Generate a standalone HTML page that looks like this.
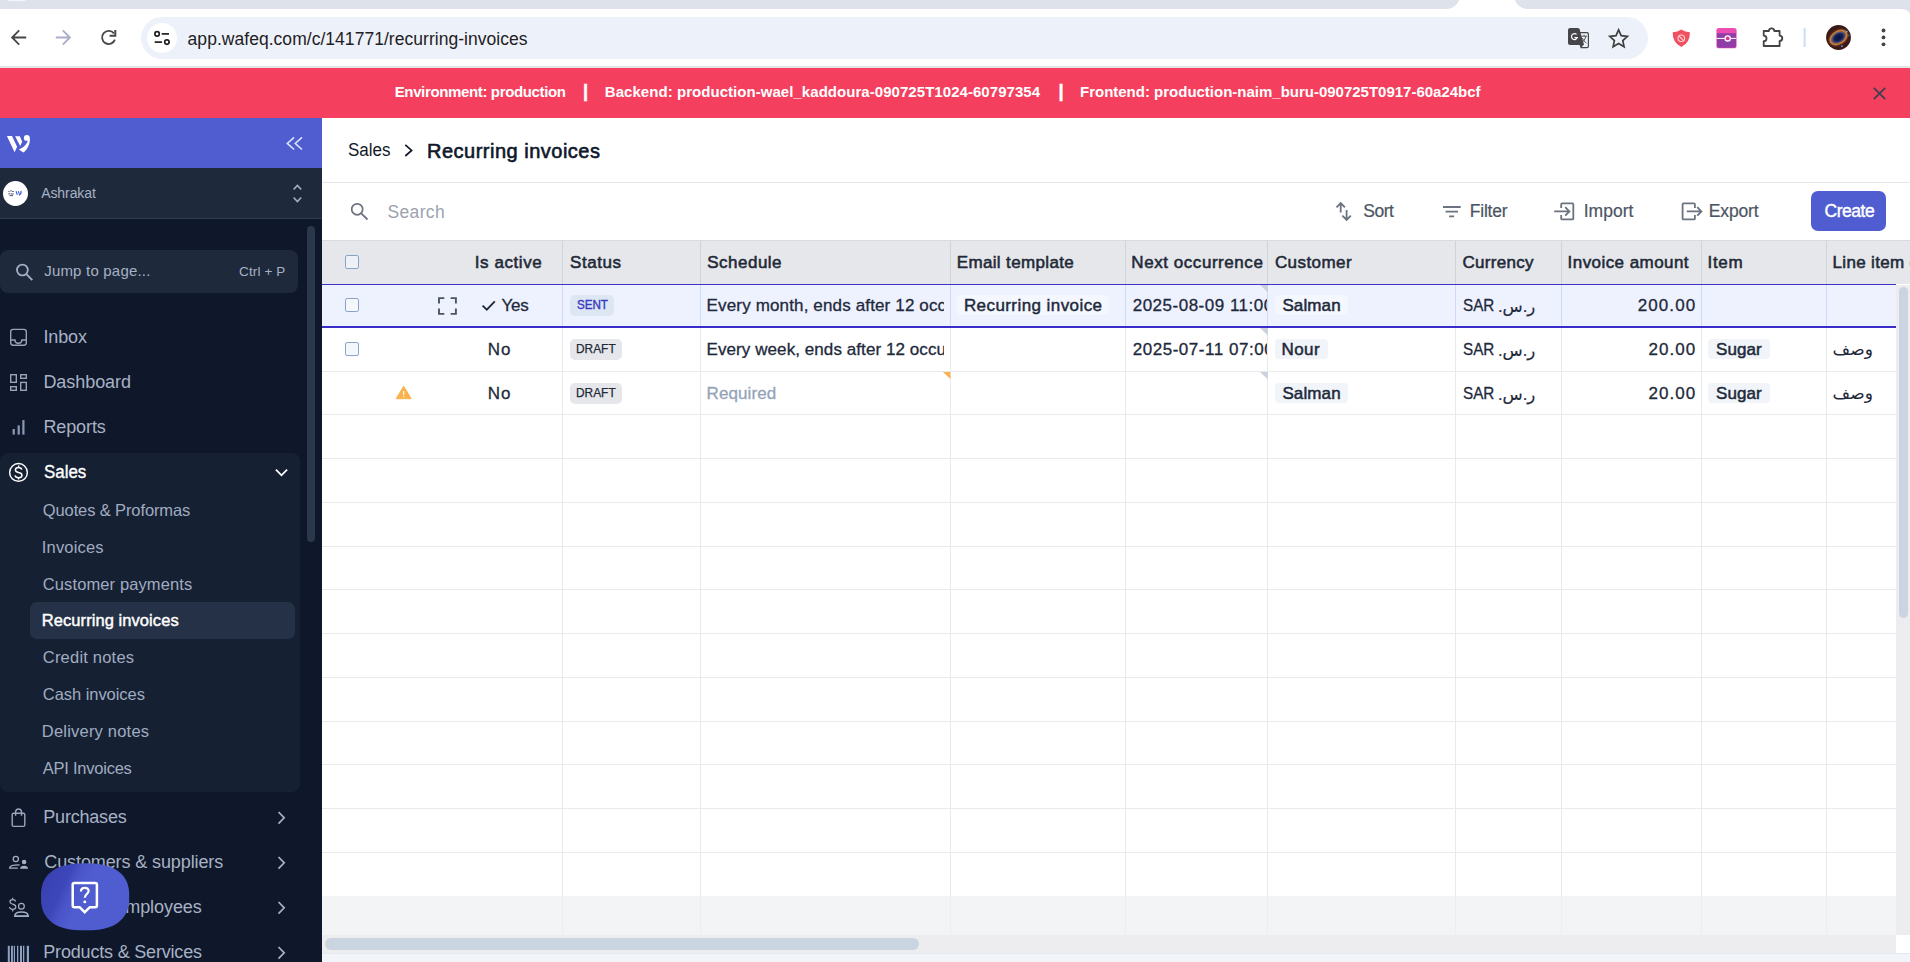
<!DOCTYPE html>
<html lang="en">
<head>
<meta charset="utf-8">
<title>Recurring invoices</title>
<style>
*{box-sizing:border-box;margin:0;padding:0}
html,body{width:1910px;height:962px;overflow:hidden;background:#fff}
body{position:relative;font-family:"Liberation Sans","DejaVu Sans",sans-serif;color:#1f2937}
.layer{position:absolute;left:0;top:0;width:1910px;height:962px;overflow:hidden}
.b{position:absolute}
.t{position:absolute;white-space:nowrap;line-height:1}
svg{display:block;position:absolute;overflow:visible}
.vl{position:absolute;width:1px;background:#e9eaec}
.hl{position:absolute;height:1px;background:#e9eaec;left:322px;width:1574px}
.chip{position:absolute;background:#f1f5f9;border-radius:4px}
.cb{position:absolute;width:14px;height:14px;border:1.4px solid #8aa0c6;border-radius:2.2px;background:#f4f7fc}
</style>
</head>
<body>
<!-- ===== browser chrome ===== -->
<div class="layer" id="chrome">
  <div class="b" style="left:0;top:0;width:1910px;height:18px;background:#dee2ea"></div>
  <div class="b" style="left:0;top:9px;width:1910px;height:20px;background:#fff;border-top-right-radius:9px 6px"></div>
  <div class="b" style="left:1440px;top:0;width:90px;height:9px;background:#fff"></div>
  <div class="b" style="left:1300px;top:-14px;width:160px;height:22.8px;background:#dee2ea;border-bottom-right-radius:14px"></div>
  <div class="b" style="left:1513.5px;top:-14px;width:420px;height:22.8px;background:#dee2ea;border-bottom-left-radius:14px"></div>
  <div class="b" style="left:7px;top:-1px;width:19px;height:1.6px;background:#f4f6fa;border-radius:0 0 2px 2px"></div>
  <div class="b" style="left:0;top:66px;width:1910px;height:2px;background:#e3e6e6"></div>
  <div class="b" style="left:141px;top:17px;width:1507px;height:42px;border-radius:21px;background:#edf2fa"></div>
  <div class="b" style="left:147px;top:23px;width:30px;height:30px;border-radius:15px;background:#fff"></div>
    <svg style="left:0;top:0" width="1910" height="68" viewBox="0 0 1910 68" fill="none" stroke-linecap="butt" stroke-linejoin="miter">
    <!-- back -->
    <path d="M26.2 37.5H12.4M19.2 30.4L12.1 37.5L19.2 44.6" stroke="#474747" stroke-width="1.8"/>
    <!-- forward (disabled) -->
    <path d="M55.8 37.5H69.6M62.8 30.4L69.9 37.5L62.8 44.6" stroke="#abacc9" stroke-width="1.8"/>
    <!-- reload -->
    <path d="M113.9 33.4A6.6 6.6 0 1 0 114.9 39.6" stroke="#474747" stroke-width="1.8"/>
    <path d="M115.3 30.1V35.8H109.6" stroke="#474747" stroke-width="2"/>
    <!-- tune / site info -->
    <circle cx="157.1" cy="33.9" r="2.2" stroke="#1f1f1f" stroke-width="1.7"/>
    <path d="M161.7 33.9H169" stroke="#1f1f1f" stroke-width="1.7"/>
    <circle cx="166.9" cy="42.1" r="2.2" stroke="#1f1f1f" stroke-width="1.7"/>
    <path d="M154.7 42.1H162" stroke="#1f1f1f" stroke-width="1.7"/>
    <!-- translate -->
    <path d="M1570 28H1577.6Q1579.6 28 1579.9 29.8L1580.3 32H1587Q1589 32 1589 34V46.3Q1589 48.3 1587 48.3H1580.6L1579.6 44.9H1570Q1568 44.9 1568 42.9V30Q1568 28 1570 28Z" fill="#46464a"/>
    <path d="M1580.6 33.2H1586.6Q1587.8 33.2 1587.8 34.4V45.9Q1587.8 47.1 1586.6 47.1H1581.6L1584 44.6Z" fill="#edf2fa"/>
    <path d="M1581.2 36.2H1587M1584.1 34.8V36.2M1586 36.2Q1585 40.5 1581.4 43.2M1582.3 38Q1583.4 41 1586.4 43.2" stroke="#46464a" stroke-width="0.9"/>
    <path d="M1576.6 34.4A3 3 0 1 0 1577.3 37.6H1574.4" stroke="#fff" stroke-width="1.2"/>
    <!-- star -->
    <path d="M1618.6 29.9L1621.2 35.7L1627.4 36.4L1622.8 40.6L1624.1 46.8L1618.6 43.6L1613.1 46.8L1614.4 40.6L1609.8 36.4L1616 35.7Z" stroke="#3f3f3f" stroke-width="1.7" stroke-linejoin="miter"/>
    <!-- shield ext -->
    <path d="M1681.3 29.6Q1685 32.2 1689.9 32.2Q1690.3 42.6 1681.3 46.9Q1672.3 42.6 1672.7 32.2Q1677.6 32.2 1681.3 29.6Z" fill="#f0505f"/>
    <circle cx="1681.3" cy="38.3" r="3.3" stroke="#fbd3d3" stroke-width="1.1"/>
    <path d="M1679 36L1683.6 40.6" stroke="#fbd3d3" stroke-width="1.1"/>
    <!-- pink ext -->
    <rect x="1716.4" y="28" width="20.2" height="20.3" rx="2.6" fill="#ec4db0"/>
    <path d="M1717 33.2H1736V45.6Q1736 47.7 1734 47.7H1719Q1717 47.7 1717 45.6Z" fill="#8e3ea6"/>
    <path d="M1716.6 38.4H1736.4" stroke="#fff" stroke-width="1"/>
    <circle cx="1727.7" cy="38.4" r="2.6" fill="#d63a9c" stroke="#fff" stroke-width="1.3"/>
    <!-- puzzle -->
    <path d="M1763.7 31H1768.9A2.7 2.7 0 0 1 1774.3 31H1779.6V35.6A2.7 2.7 0 0 1 1779.6 41V46H1763.7V41.2A2.8 2.8 0 0 0 1763.7 35.6Z" stroke="#444" stroke-width="1.8" stroke-linejoin="round"/>
    <!-- separator -->
    <rect x="1803.6" y="27.8" width="2" height="19.2" fill="#c9dcf8"/>
    <!-- dots -->
    <circle cx="1883.5" cy="30.5" r="1.9" fill="#444"/><circle cx="1883.5" cy="37.4" r="1.9" fill="#444"/><circle cx="1883.5" cy="44.3" r="1.9" fill="#444"/>
  </svg>
  <svg style="left:1826px;top:25px" width="25" height="25" viewBox="0 0 25 25">
    <defs><clipPath id="avc"><circle cx="12.5" cy="12.5" r="12.4"/></clipPath>
    <radialGradient id="avg" cx="50%" cy="50%" r="50%"><stop offset="0" stop-color="#0a1038"/><stop offset="0.6" stop-color="#121c52"/><stop offset="1" stop-color="#3c4a78"/></radialGradient></defs>
    <g clip-path="url(#avc)">
      <rect width="25" height="25" fill="#3a1a19"/>
      <g transform="rotate(-32 12.5 12.5)">
        <ellipse cx="12.5" cy="12.5" rx="11.3" ry="8.2" fill="#5a2a1e"/>
        <ellipse cx="12.5" cy="12.5" rx="10" ry="6.9" fill="#c47a34"/>
        <ellipse cx="12.5" cy="12.5" rx="8" ry="5.3" fill="#6a5a6a"/>
        <ellipse cx="12.5" cy="12.5" rx="6.9" ry="4.6" fill="url(#avg)"/>
      </g>
      <circle cx="20.8" cy="6.6" r="0.9" fill="#5aa0e8"/><circle cx="16" cy="21.2" r="0.9" fill="#5aa0e8"/><circle cx="23" cy="10.4" r="0.6" fill="#3b7fd0"/>
    </g>
  </svg>

<div class="t" style="left:187.60px;top:31.00px;font-size:17.5px;letter-spacing:0.036px;color:#1f2023;">app.wafeq.com/c/141771/recurring-invoices</div>
</div>
<!-- ===== environment banner ===== -->
<div class="layer" id="banner">
  <div class="b" style="left:0;top:68px;width:1910px;height:50px;background:#f43f5e"></div>
  <svg style="left:1873px;top:87px" width="13" height="13" viewBox="0 0 13 13"><path d="M0.8 0.8 L12.2 12.2 M12.2 0.8 L0.8 12.2" stroke="#3b3f4e" stroke-width="1.7" fill="none"/></svg>
<div class="t" style="left:394.70px;top:84.00px;font-size:15px;font-weight:700;letter-spacing:-0.359px;color:#ffffff;">Environment: production</div>
<div class="t" style="left:583.10px;top:82.00px;font-size:18.5px;font-weight:700;color:#ffffff;-webkit-text-stroke:0.5px currentColor;">|</div>
<div class="t" style="left:604.80px;top:84.00px;font-size:15px;font-weight:700;letter-spacing:0.048px;color:#ffffff;">Backend: production-wael_kaddoura-090725T1024-60797354</div>
<div class="t" style="left:1058.60px;top:82.00px;font-size:18.5px;font-weight:700;color:#ffffff;-webkit-text-stroke:0.5px currentColor;">|</div>
<div class="t" style="left:1080.00px;top:84.00px;font-size:15px;font-weight:700;letter-spacing:-0.007px;color:#ffffff;">Frontend: production-naim_buru-090725T0917-60a24bcf</div>
</div>
<!-- ===== sidebar ===== -->
<div class="layer" id="sidebar" style="width:322px">
  <div class="b" style="left:0;top:118px;width:322px;height:844px;background:#0f172a"></div>
  <div class="b" style="left:0;top:118px;width:322px;height:50px;background:#505dd1"></div>
  <div class="b" style="left:0;top:168px;width:322px;height:51px;background:#1e293b;border-bottom:1px solid #303c50"></div>
  <div class="b" style="left:0;top:250px;width:298px;height:43px;border-radius:8px;background:#1e293b"></div>
  <div class="b" style="left:307px;top:226px;width:8px;height:316px;border-radius:4px;background:#2b384c"></div>
  <div class="b" style="left:0;top:453px;width:300px;height:339px;border-radius:8px;background:#162033"></div>
  <div class="b" style="left:30px;top:602px;width:265px;height:37px;border-radius:7px;background:#253146"></div>
  <div class="b" style="left:3px;top:181px;width:25px;height:25px;border-radius:50%;background:#fff"></div>
    <svg style="left:0;top:0" width="322" height="962" viewBox="0 0 322 962" fill="none">
    <!-- wafeq logo -->
    <g fill="#fff">
      <path d="M6.9 136.1H12L17.1 146.8L14.6 152.2Z"/>
      <path d="M15.1 136.3H19.8L22.2 141.7L20.2 146Z"/>
      <circle cx="26.8" cy="137.9" r="2.95"/>
      <path d="M29.75 137.9C30.6 143.5 27.2 149.6 23.3 152.6L18.9 149.5C22.8 148.2 26.6 145 27.9 140.6Z"/>
    </g>
    <!-- collapse « -->
    <path d="M294.1 137.4L287.3 143.4L294.1 149.5M302 137.4L295.2 143.4L302 149.5" stroke="#dfe6f6" stroke-width="1.5"/>
    <!-- company logo inside avatar -->
    <g>
      <path d="M8.3 191.6h1.2M10.2 190.9h1.6M12.2 191.5h1.6M8.3 193.8h2.2M11 194h2.8M9.4 195.6h3.6" stroke="#3b4a6a" stroke-width="0.9"/>
      <path d="M16 191.3l1.4 3.6M18.2 191.3l1 2.3M20.9 190.9q0.9 2.6-1.9 4.3" stroke="#3658d8" stroke-width="1.1"/>
    </g>
    <!-- up / down -->
    <path d="M293.6 189.5L297.4 185.5L301.2 189.5M293.6 197.5L297.4 201.5L301.2 197.5" stroke="#a3afc5" stroke-width="1.6"/>
    <!-- search -->
    <circle cx="22.4" cy="270" r="5.4" stroke="#a3afc5" stroke-width="1.8"/>
    <path d="M26.4 274.2L32.3 280.1" stroke="#a3afc5" stroke-width="1.9"/>
    <!-- inbox -->
    <g stroke="#9aa3b6" stroke-width="1.4">
      <rect x="10.7" y="329.4" width="15.6" height="15.8" rx="2.4"/>
      <path d="M10.7 340H15A3.4 3.2 0 0 0 21.8 340H26.3"/>
    </g>
    <!-- dashboard -->
    <g stroke="#9aa3b6" stroke-width="1.4">
      <rect x="10.7" y="374.7" width="5.6" height="7.6"/><rect x="20.7" y="374.7" width="5.6" height="3.6"/>
      <rect x="10.7" y="386.7" width="5.6" height="3.6"/><rect x="20.7" y="382.4" width="5.6" height="7.9"/>
    </g>
    <!-- reports -->
    <g fill="#8b99b6"><rect x="12.6" y="429" width="2.2" height="5.6"/><rect x="17.6" y="425.4" width="2.2" height="9.2"/><rect x="22.3" y="420.1" width="2.2" height="14.5"/></g>
    <!-- sales -->
    <g stroke="#fff" stroke-width="1.45">
      <circle cx="18.5" cy="472.4" r="8.85"/>
      <path d="M21.8 469.7C21.5 468.3 20.3 467.5 18.6 467.5C16.7 467.5 15.4 468.5 15.4 469.9C15.4 471.5 16.8 472 18.6 472.5C20.6 473 22 473.6 22 475.2C22 476.8 20.6 477.7 18.6 477.7C16.7 477.7 15.3 476.8 15.1 475.4M18.6 465.6V467.5M18.6 477.7V479.5"/>
    </g>
    <path d="M275.9 469.6L281.5 475.3L287.1 469.6" stroke="#fff" stroke-width="1.8"/>
    <!-- purchases -->
    <g stroke="#9aa6bd" stroke-width="1.4">
      <rect x="12.2" y="813.2" width="12.6" height="13.2" rx="1.4"/>
      <path d="M15.6 815.8V811.6A3 3.2 0 0 1 21.5 811.6V815.8"/>
    </g>
    <!-- customers & suppliers -->
    <g stroke="#a3afc5" stroke-width="1.3">
      <circle cx="15.8" cy="859" r="2.6"/>
      <path d="M17.8 868.2H9.7V867.6C9.7 865.6 13.4 864.8 19.6 864.8"/>
    </g>
    <g fill="#a3afc5"><circle cx="24.1" cy="862" r="2.3"/><path d="M20 868.8C20 866.8 22 865.7 24.1 865.7C26.2 865.7 28.2 866.8 28.2 868.8Z"/></g>
    <!-- payroll -->
    <g stroke="#a3afc5" stroke-width="1.2">
      <path d="M15.5 901.5C15.3 900.3 14.2 899.6 12.7 899.6C11 899.6 9.9 900.5 9.9 901.8C9.9 903.2 11.1 903.7 12.7 904.2C14.5 904.7 15.8 905.3 15.8 906.9C15.8 908.4 14.5 909.3 12.7 909.3C11 909.3 9.7 908.4 9.5 907M12.7 897.8V899.6M12.7 909.3V911.4"/>
      <circle cx="21.4" cy="906.2" r="2.9"/>
      <path d="M14.8 916.2C14.8 913.2 17.6 912.1 21.4 912.1C25.2 912.1 28.2 913.2 28.2 916.2Z" stroke-width="1.5"/>
    </g>
    <path d="M14.4 916.9H28.6V915.4H14.4Z" fill="#a3afc5"/>
    <!-- products (barcode) -->
    <g fill="#8fa0c0"><rect x="7.8" y="945.8" width="2" height="16.2"/><rect x="11" y="945.8" width="1.9" height="16.2"/><rect x="13.8" y="945.8" width="1.2" height="16.2"/><rect x="17" y="945.8" width="1.3" height="16.2"/><rect x="20" y="945.8" width="2" height="16.2"/><rect x="23" y="945.8" width="1.3" height="16.2"/><rect x="26.8" y="945.8" width="2.2" height="16.2"/></g>
    <!-- chevrons right -->
    <g stroke="#a7b2c5" stroke-width="1.7">
      <path d="M278.5 812L284.2 817.8L278.5 823.6"/><path d="M278.5 857L284.2 862.8L278.5 868.6"/><path d="M278.5 902L284.2 907.8L278.5 913.6"/><path d="M278.5 947L284.2 952.8L278.5 958.6"/>
    </g>
  </svg>

<div class="t" style="left:41.20px;top:186.00px;font-size:14px;letter-spacing:-0.080px;color:#a7b2c5;">Ashrakat</div>
<div class="t" style="left:44.20px;top:263.00px;font-size:15px;letter-spacing:0.198px;color:#a7b2c5;">Jump to page...</div>
<div class="t" style="left:239.00px;top:265.00px;font-size:13.5px;letter-spacing:0.131px;color:#a7b2c5;">Ctrl + P</div>
<div class="t" style="left:43.40px;top:328.00px;font-size:18px;letter-spacing:-0.108px;color:#a7b2c5;">Inbox</div>
<div class="t" style="left:43.40px;top:373.00px;font-size:18px;letter-spacing:-0.056px;color:#a7b2c5;">Dashboard</div>
<div class="t" style="left:43.40px;top:418.00px;font-size:18px;letter-spacing:-0.104px;color:#a7b2c5;">Reports</div>
<div class="t" style="left:44.40px;top:463.00px;font-size:18px;color:#ffffff;transform:scaleX(0.9394);transform-origin:0 0;-webkit-text-stroke:0.35px currentColor;">Sales</div>
<div class="t" style="left:42.80px;top:502.00px;font-size:16.5px;letter-spacing:-0.119px;color:#a0acc0;">Quotes &amp; Proformas</div>
<div class="t" style="left:41.80px;top:539.00px;font-size:16.5px;letter-spacing:0.174px;color:#a0acc0;">Invoices</div>
<div class="t" style="left:42.80px;top:576.00px;font-size:16.5px;letter-spacing:0.113px;color:#a0acc0;">Customer payments</div>
<div class="t" style="left:41.80px;top:612.00px;font-size:16.5px;letter-spacing:0.066px;color:#ffffff;-webkit-text-stroke:0.45px currentColor;">Recurring invoices</div>
<div class="t" style="left:42.80px;top:649.00px;font-size:16.5px;letter-spacing:0.208px;color:#a0acc0;">Credit notes</div>
<div class="t" style="left:42.80px;top:686.00px;font-size:16.5px;letter-spacing:-0.047px;color:#a0acc0;">Cash invoices</div>
<div class="t" style="left:41.80px;top:723.00px;font-size:16.5px;letter-spacing:0.208px;color:#a0acc0;">Delivery notes</div>
<div class="t" style="left:42.80px;top:760.00px;font-size:16.5px;letter-spacing:-0.242px;color:#a0acc0;">API Invoices</div>
<div class="t" style="left:43.30px;top:808.00px;font-size:18px;letter-spacing:-0.205px;color:#a7b2c5;">Purchases</div>
<div class="t" style="left:44.30px;top:853.00px;font-size:18px;letter-spacing:-0.108px;color:#a7b2c5;">Customers &amp; suppliers</div>
<div class="t" style="left:43.30px;top:898.00px;font-size:18px;letter-spacing:-0.065px;word-spacing:-2.2px;color:#a7b2c5;">Payroll &amp; employees</div>
<div class="t" style="left:43.30px;top:943.00px;font-size:18px;letter-spacing:-0.187px;color:#a7b2c5;">Products &amp; Services</div>
</div>
<!-- ===== main content ===== -->
<div class="layer" id="main">
  <div class="b" style="left:322px;top:182px;width:1588px;height:1px;background:#e5e7eb"></div>
  <!-- table header -->
  <div class="b" style="left:322px;top:240px;width:1588px;height:44px;background:#e5e7eb;border-top:1px solid #d8dbe0"></div>
  <div class="vl" style="left:562px;top:241px;height:43px;background:#cfd3da"></div>
  <div class="vl" style="left:700px;top:241px;height:43px;background:#cfd3da"></div>
  <div class="vl" style="left:950px;top:241px;height:43px;background:#cfd3da"></div>
  <div class="vl" style="left:1125px;top:241px;height:43px;background:#cfd3da"></div>
  <div class="vl" style="left:1267px;top:241px;height:43px;background:#cfd3da"></div>
  <div class="vl" style="left:1455px;top:241px;height:43px;background:#cfd3da"></div>
  <div class="vl" style="left:1561px;top:241px;height:43px;background:#cfd3da"></div>
  <div class="vl" style="left:1701px;top:241px;height:43px;background:#cfd3da"></div>
  <div class="vl" style="left:1826px;top:241px;height:43px;background:#cfd3da"></div>
  <!-- body grid -->
  <div class="vl" style="left:562px;top:328px;height:568px"></div>
  <div class="vl" style="left:700px;top:328px;height:568px"></div>
  <div class="vl" style="left:950px;top:328px;height:568px"></div>
  <div class="vl" style="left:1125px;top:328px;height:568px"></div>
  <div class="vl" style="left:1267px;top:328px;height:568px"></div>
  <div class="vl" style="left:1455px;top:328px;height:568px"></div>
  <div class="vl" style="left:1561px;top:328px;height:568px"></div>
  <div class="vl" style="left:1701px;top:328px;height:568px"></div>
  <div class="vl" style="left:1826px;top:328px;height:568px"></div>
  <div class="hl" style="top:371px"></div>
  <div class="hl" style="top:414px"></div>
  <div class="hl" style="top:458px"></div>
  <div class="hl" style="top:502px"></div>
  <div class="hl" style="top:546px"></div>
  <div class="hl" style="top:589px"></div>
  <div class="hl" style="top:633px"></div>
  <div class="hl" style="top:677px"></div>
  <div class="hl" style="top:721px"></div>
  <div class="hl" style="top:764px"></div>
  <div class="hl" style="top:808px"></div>
  <div class="hl" style="top:852px"></div>
  <!-- footer row -->
  <div class="b" style="left:322px;top:896px;width:1574px;height:39px;background:#f3f4f6"></div>
  <div class="vl" style="left:562px;top:896px;height:39px;background:#eceef0"></div>
  <div class="vl" style="left:700px;top:896px;height:39px;background:#eceef0"></div>
  <div class="vl" style="left:950px;top:896px;height:39px;background:#eceef0"></div>
  <div class="vl" style="left:1125px;top:896px;height:39px;background:#eceef0"></div>
  <div class="vl" style="left:1267px;top:896px;height:39px;background:#eceef0"></div>
  <div class="vl" style="left:1455px;top:896px;height:39px;background:#eceef0"></div>
  <div class="vl" style="left:1561px;top:896px;height:39px;background:#eceef0"></div>
  <div class="vl" style="left:1701px;top:896px;height:39px;background:#eceef0"></div>
  <div class="vl" style="left:1826px;top:896px;height:39px;background:#eceef0"></div>
  <!-- selected row -->
  <div class="b" style="left:322px;top:284px;width:1574px;height:44px;background:#eef2ff;border-top:1.3px solid #3f33c9;border-bottom:2.4px solid #3a2cc8"></div>
  <div class="vl" style="left:562px;top:285.3px;height:40.3px;background:#cddcf6"></div>
  <div class="vl" style="left:700px;top:285.3px;height:40.3px;background:#cddcf6"></div>
  <div class="vl" style="left:950px;top:285.3px;height:40.3px;background:#cddcf6"></div>
  <div class="vl" style="left:1125px;top:285.3px;height:40.3px;background:#cddcf6"></div>
  <div class="vl" style="left:1267px;top:285.3px;height:40.3px;background:#cddcf6"></div>
  <div class="vl" style="left:1455px;top:285.3px;height:40.3px;background:#cddcf6"></div>
  <div class="vl" style="left:1561px;top:285.3px;height:40.3px;background:#cddcf6"></div>
  <div class="vl" style="left:1701px;top:285.3px;height:40.3px;background:#cddcf6"></div>
  <div class="vl" style="left:1826px;top:285.3px;height:40.3px;background:#cddcf6"></div>
  <!-- scrollbars -->
  <div class="b" style="left:1896px;top:285px;width:14px;height:650px;background:#ededef"></div>
  <div class="b" style="left:1899px;top:287px;width:9px;height:331px;border-radius:4.5px;background:#cbd5e1"></div>
  <div class="b" style="left:322px;top:935px;width:1574px;height:18px;background:#ededef"></div>
  <div class="b" style="left:325px;top:938px;width:594px;height:12px;border-radius:6px;background:#cbd5e1"></div>
  <div class="b" style="left:322px;top:953px;width:1588px;height:9px;background:#f1f5f9;border-top:1px solid #e4e9ef"></div>
  <!-- create button -->
  <div class="b" style="left:1811px;top:191px;width:75px;height:40px;border-radius:7px;background:#505dd1"></div>
  <!-- badges / chips -->
  <div class="b" style="left:570px;top:294.8px;width:43.8px;height:21px;border-radius:5px;background:#dde6f3"></div>
  <div class="b" style="left:570px;top:339px;width:51.8px;height:21px;border-radius:5px;background:#e5e7eb"></div>
  <div class="b" style="left:570px;top:382.6px;width:51.8px;height:21px;border-radius:5px;background:#e5e7eb"></div>
  <div class="chip" style="left:957px;top:295px;width:151.8px;height:19.6px;background:#f4f7fd"></div>
  <div class="chip" style="left:1275px;top:295px;width:72.6px;height:19.6px;background:#f4f7fd"></div>
  <div class="chip" style="left:1275px;top:339px;width:52.8px;height:19.6px"></div>
  <div class="chip" style="left:1275px;top:383px;width:72.6px;height:19.6px"></div>
  <div class="chip" style="left:1708px;top:339px;width:62px;height:19.6px"></div>
  <div class="chip" style="left:1708px;top:383px;width:62px;height:19.6px"></div>
  <!-- checkboxes -->
  <div class="cb" style="left:345px;top:255px;background:#eef1f6"></div>
  <div class="cb" style="left:345px;top:298px"></div>
  <div class="cb" style="left:345px;top:342px"></div>
  <!-- cell corner markers -->
  <svg style="left:1259.5px;top:285.3px" width="8" height="7.5" viewBox="0 0 8 7.5"><path d="M0 0H8V7.5Z" fill="#cbd2de"/></svg>
  <svg style="left:1259.5px;top:328px" width="8" height="7.5" viewBox="0 0 8 7.5"><path d="M0 0H8V7.5Z" fill="#cbd2de"/></svg>
  <svg style="left:1259.5px;top:372px" width="8" height="7.5" viewBox="0 0 8 7.5"><path d="M0 0H8V7.5Z" fill="#cbd2de"/></svg>
  <svg style="left:942.8px;top:372px" width="7.4" height="7" viewBox="0 0 7.4 7"><path d="M0 0H7.4V7Z" fill="#f9b24d"/></svg>
    <svg style="left:0;top:0" width="1910" height="962" viewBox="0 0 1910 962" fill="none">
    <!-- breadcrumb chevron -->
    <path d="M405.3 144.8L411.6 150.4L405.3 156" stroke="#111827" stroke-width="1.7"/>
    <!-- search -->
    <circle cx="357.2" cy="209.3" r="5.5" stroke="#6b7280" stroke-width="1.7"/>
    <path d="M361.2 213.4L367.5 219.5" stroke="#6b7280" stroke-width="1.8"/>
    <!-- sort -->
    <path d="M1340.7 212.6V203M1336.5 207.4L1340.7 203.1L1344.9 207.4M1346.6 209.9V219.8M1342.4 215.6L1346.6 219.9L1350.8 215.6" stroke="#6b7280" stroke-width="1.8"/>
    <!-- filter -->
    <path d="M1443 207H1460.7M1445.6 211.7H1458M1449.1 216.3H1454.1" stroke="#6b7280" stroke-width="1.8"/>
    <!-- import -->
    <path d="M1561.2 208V204.4Q1561.2 203.4 1562.2 203.4H1572.3Q1573.3 203.4 1573.3 204.4V218.4Q1573.3 219.4 1572.3 219.4H1562.2Q1561.2 219.4 1561.2 218.4V214.9" stroke="#6b7280" stroke-width="1.8"/>
    <path d="M1554.2 211.4H1569M1565.2 207.1L1569.4 211.4L1565.2 215.7" stroke="#6b7280" stroke-width="1.8"/>
    <!-- export -->
    <path d="M1694.9 208V204.4Q1694.9 203.4 1693.9 203.4H1683.6Q1682.6 203.4 1682.6 204.4V218.4Q1682.6 219.4 1683.6 219.4H1693.9Q1694.9 219.4 1694.9 218.4V214.9" stroke="#6b7280" stroke-width="1.8"/>
    <path d="M1686.8 211.4H1701M1697.2 207.1L1701.4 211.4L1697.2 215.7" stroke="#6b7280" stroke-width="1.8"/>
    <!-- expand row -->
    <path d="M439 303.4V298.1H444.3M450.6 298.1H455.9V303.4M455.9 308.6V313.9H450.6M444.3 313.9H439V308.6" stroke="#4b5563" stroke-width="1.9"/>
    <!-- check -->
    <path d="M482.6 305.6L486.8 309.7L494.8 301.4" stroke="#1e293b" stroke-width="1.8"/>
    <!-- warning -->
    <path d="M403.7 386.3L411.2 398.7H396.2Z" fill="#f9b24e" stroke="#f9b24e" stroke-width="1" stroke-linejoin="round"/>
    <path d="M403.7 391V395" stroke="#fff" stroke-width="1.1"/><circle cx="403.7" cy="396.7" r="0.6" fill="#fff"/>
  </svg>

<div class="t" style="left:347.50px;top:141.00px;font-size:18px;color:#111827;transform:scaleX(0.9439);transform-origin:0 0;">Sales</div>
<div class="t" style="left:427.00px;top:141.00px;font-size:20px;letter-spacing:0.499px;color:#0f172a;-webkit-text-stroke:0.6px currentColor;">Recurring invoices</div>
<div class="t" style="left:387.50px;top:204.00px;font-size:17.5px;letter-spacing:0.337px;color:#9ca3af;">Search</div>
<div class="t" style="left:1363.20px;top:203.00px;font-size:17.5px;letter-spacing:-0.478px;color:#4b5563;-webkit-text-stroke:0.2px currentColor;">Sort</div>
<div class="t" style="left:1469.70px;top:203.00px;font-size:17.5px;letter-spacing:-0.192px;color:#4b5563;-webkit-text-stroke:0.2px currentColor;">Filter</div>
<div class="t" style="left:1583.70px;top:203.00px;font-size:17.5px;letter-spacing:0.013px;color:#4b5563;-webkit-text-stroke:0.2px currentColor;">Import</div>
<div class="t" style="left:1708.80px;top:203.00px;font-size:17.5px;letter-spacing:-0.163px;color:#4b5563;-webkit-text-stroke:0.2px currentColor;">Export</div>
<div class="t" style="left:1824.50px;top:203.00px;font-size:17.5px;letter-spacing:-0.479px;color:#ffffff;-webkit-text-stroke:0.4px currentColor;">Create</div>
<div class="t" style="left:474.80px;top:254.00px;font-size:17px;letter-spacing:0.562px;color:#1f2937;-webkit-text-stroke:0.55px currentColor;">Is active</div>
<div class="t" style="left:570.00px;top:254.00px;font-size:17px;letter-spacing:0.581px;color:#1f2937;-webkit-text-stroke:0.55px currentColor;">Status</div>
<div class="t" style="left:707.30px;top:254.00px;font-size:17px;letter-spacing:0.481px;color:#1f2937;-webkit-text-stroke:0.55px currentColor;">Schedule</div>
<div class="t" style="left:956.70px;top:254.00px;font-size:17px;letter-spacing:0.355px;color:#1f2937;-webkit-text-stroke:0.55px currentColor;">Email template</div>
<div class="t" style="left:1131.30px;top:254.00px;font-size:17px;letter-spacing:0.556px;color:#1f2937;-webkit-text-stroke:0.55px currentColor;">Next occurrence</div>
<div class="t" style="left:1274.90px;top:254.00px;font-size:17px;letter-spacing:0.425px;color:#1f2937;-webkit-text-stroke:0.55px currentColor;">Customer</div>
<div class="t" style="left:1462.50px;top:254.00px;font-size:17px;letter-spacing:0.291px;color:#1f2937;-webkit-text-stroke:0.55px currentColor;">Currency</div>
<div class="t" style="left:1567.60px;top:254.00px;font-size:17px;letter-spacing:0.433px;color:#1f2937;-webkit-text-stroke:0.55px currentColor;">Invoice amount</div>
<div class="t" style="left:1707.50px;top:254.00px;font-size:17px;letter-spacing:0.666px;color:#1f2937;-webkit-text-stroke:0.55px currentColor;">Item</div>
<div class="t" style="left:1832.60px;top:254.00px;font-size:17px;letter-spacing:0.323px;color:#1f2937;-webkit-text-stroke:0.55px currentColor;">Line item description</div>
<div class="t" style="left:501.60px;top:297.00px;font-size:17px;letter-spacing:-0.316px;color:#1e293b;-webkit-text-stroke:0.3px currentColor;">Yes</div>
<div class="t" style="left:487.80px;top:341.00px;font-size:17px;letter-spacing:1.023px;color:#1e293b;-webkit-text-stroke:0.3px currentColor;">No</div>
<div class="t" style="left:487.80px;top:385.00px;font-size:17px;letter-spacing:1.023px;color:#1e293b;-webkit-text-stroke:0.3px currentColor;">No</div>
<div class="t" style="left:576.80px;top:298.00px;font-size:13.2px;color:#373bc0;transform:scaleX(0.8800);transform-origin:0 0;-webkit-text-stroke:0.4px currentColor;">SENT</div>
<div class="t" style="left:575.90px;top:342.00px;font-size:13.2px;color:#1f2937;transform:scaleX(0.9021);transform-origin:0 0;-webkit-text-stroke:0.25px currentColor;">DRAFT</div>
<div class="t" style="left:575.90px;top:386.00px;font-size:13.2px;color:#1f2937;transform:scaleX(0.9021);transform-origin:0 0;-webkit-text-stroke:0.25px currentColor;">DRAFT</div>
<div class="t" style="left:706.60px;top:297.00px;font-size:17px;letter-spacing:0.146px;color:#1e293b;-webkit-text-stroke:0.3px currentColor;width:237.70px;overflow:hidden;">Every month, ends after 12 occurrences</div>
<div class="t" style="left:706.60px;top:341.00px;font-size:17px;letter-spacing:0.075px;color:#1e293b;-webkit-text-stroke:0.3px currentColor;width:237.70px;overflow:hidden;">Every week, ends after 12 occurrences</div>
<div class="t" style="left:706.60px;top:385.00px;font-size:17px;letter-spacing:0.095px;color:#94a3b8;-webkit-text-stroke:0.3px currentColor;">Required</div>
<div class="t" style="left:963.90px;top:297.00px;font-size:17px;letter-spacing:0.426px;color:#1e293b;-webkit-text-stroke:0.45px currentColor;">Recurring invoice</div>
<div class="t" style="left:1132.70px;top:297.00px;font-size:17px;letter-spacing:0.503px;color:#1e293b;-webkit-text-stroke:0.3px currentColor;width:134.70px;overflow:hidden;">2025-08-09 11:00</div>
<div class="t" style="left:1132.70px;top:341.00px;font-size:17px;letter-spacing:0.539px;color:#1e293b;-webkit-text-stroke:0.3px currentColor;width:134.70px;overflow:hidden;">2025-07-11 07:00</div>
<div class="t" style="left:1282.40px;top:297.00px;font-size:17px;letter-spacing:0.123px;color:#1e293b;-webkit-text-stroke:0.5px currentColor;">Salman</div>
<div class="t" style="left:1281.40px;top:341.00px;font-size:17px;letter-spacing:0.471px;color:#1e293b;-webkit-text-stroke:0.5px currentColor;">Nour</div>
<div class="t" style="left:1282.40px;top:385.00px;font-size:17px;letter-spacing:0.123px;color:#1e293b;-webkit-text-stroke:0.5px currentColor;">Salman</div>
<div class="t" style="left:1462.50px;top:297.00px;font-size:17px;color:#1e293b;transform:scaleX(0.8968);transform-origin:0 0;-webkit-text-stroke:0.3px currentColor;">SAR</div>
<div class="t" style="left:1498.00px;top:298.00px;font-size:16.5px;color:#1e293b;-webkit-text-stroke:0.2px currentColor;direction:rtl;">ر.س.</div>
<div class="t" style="left:1462.50px;top:341.00px;font-size:17px;color:#1e293b;transform:scaleX(0.8968);transform-origin:0 0;-webkit-text-stroke:0.3px currentColor;">SAR</div>
<div class="t" style="left:1498.00px;top:342.00px;font-size:16.5px;color:#1e293b;-webkit-text-stroke:0.2px currentColor;direction:rtl;">ر.س.</div>
<div class="t" style="left:1462.50px;top:385.00px;font-size:17px;color:#1e293b;transform:scaleX(0.8968);transform-origin:0 0;-webkit-text-stroke:0.3px currentColor;">SAR</div>
<div class="t" style="left:1498.00px;top:386.00px;font-size:16.5px;color:#1e293b;-webkit-text-stroke:0.2px currentColor;direction:rtl;">ر.س.</div>
<div class="t" style="left:1637.70px;top:297.00px;font-size:17px;letter-spacing:1.092px;color:#1e293b;-webkit-text-stroke:0.3px currentColor;">200.00</div>
<div class="t" style="left:1648.40px;top:341.00px;font-size:17px;letter-spacing:1.053px;color:#1e293b;-webkit-text-stroke:0.3px currentColor;">20.00</div>
<div class="t" style="left:1648.40px;top:385.00px;font-size:17px;letter-spacing:1.053px;color:#1e293b;-webkit-text-stroke:0.3px currentColor;">20.00</div>
<div class="t" style="left:1716.00px;top:341.00px;font-size:17px;letter-spacing:0.074px;color:#1e293b;-webkit-text-stroke:0.5px currentColor;">Sugar</div>
<div class="t" style="left:1716.00px;top:385.00px;font-size:17px;letter-spacing:0.074px;color:#1e293b;-webkit-text-stroke:0.5px currentColor;">Sugar</div>
<div class="t" style="left:1832.60px;top:341.00px;font-size:17px;color:#1e293b;direction:rtl;">وصف</div>
<div class="t" style="left:1832.60px;top:385.00px;font-size:17px;color:#1e293b;direction:rtl;">وصف</div>
</div>
<!-- ===== floating help button ===== -->
<div class="layer" id="overlay">
    <svg style="left:0;top:0" width="322" height="962" viewBox="0 0 322 962" fill="none">
    <defs><linearGradient id="hg" gradientUnits="userSpaceOnUse" x1="41" y1="875" x2="95.6" y2="899.9">
      <stop offset="0" stop-color="#3840b0"/><stop offset="0.42" stop-color="#3e47ba"/><stop offset="0.56" stop-color="#4954c8"/><stop offset="0.78" stop-color="#505dd1"/><stop offset="1" stop-color="#505dd1"/></linearGradient></defs>
    <path d="M129.2 896.8L129.1 901.6L128.7 905.1L128.0 908.2L127.1 911.0L125.9 913.6L124.4 916.0L122.7 918.3L120.7 920.3L118.5 922.2L116.1 923.9L113.4 925.4L110.4 926.7L107.2 927.8L103.8 928.7L100.1 929.4L96.0 929.9L91.4 930.2L85.1 930.3L78.8 930.2L74.2 929.9L70.1 929.4L66.4 928.7L63.0 927.8L59.8 926.7L56.8 925.4L54.1 923.9L51.7 922.2L49.5 920.3L47.5 918.3L45.8 916.0L44.3 913.6L43.1 911.0L42.2 908.2L41.5 905.1L41.1 901.6L41.0 896.8L41.1 892.0L41.5 888.5L42.2 885.4L43.1 882.6L44.3 880.0L45.8 877.6L47.5 875.3L49.5 873.3L51.7 871.4L54.1 869.7L56.8 868.2L59.8 866.9L63.0 865.8L66.4 864.9L70.1 864.2L74.2 863.7L78.8 863.4L85.1 863.3L91.4 863.4L96.0 863.7L100.1 864.2L103.8 864.9L107.2 865.8L110.4 866.9L113.4 868.2L116.1 869.7L118.5 871.4L120.7 873.3L122.7 875.3L124.4 877.6L125.9 880.0L127.1 882.6L128.0 885.4L128.7 888.5L129.1 892.0Z" fill="url(#hg)"/>
    <path d="M74.3 882.9H95.3Q96.9 882.9 96.9 884.5V905.6Q96.9 907.2 95.3 907.2H89.8L84.7 912.2L79.6 907.2H74.3Q72.7 907.2 72.7 905.6V884.5Q72.7 882.9 74.3 882.9Z" stroke="#fff" stroke-width="2.5" stroke-linejoin="miter"/>
    <path d="M80.9 891.4C80.9 888.9 82.6 887.8 84.7 887.8C86.9 887.8 88.6 889.1 88.6 891.1C88.6 894 84.8 894.2 84.8 897.8" stroke="#fff" stroke-width="2.2"/>
    <circle cx="84.8" cy="901.9" r="1.45" fill="#fff"/>
  </svg>

</div>

</body>
</html>
